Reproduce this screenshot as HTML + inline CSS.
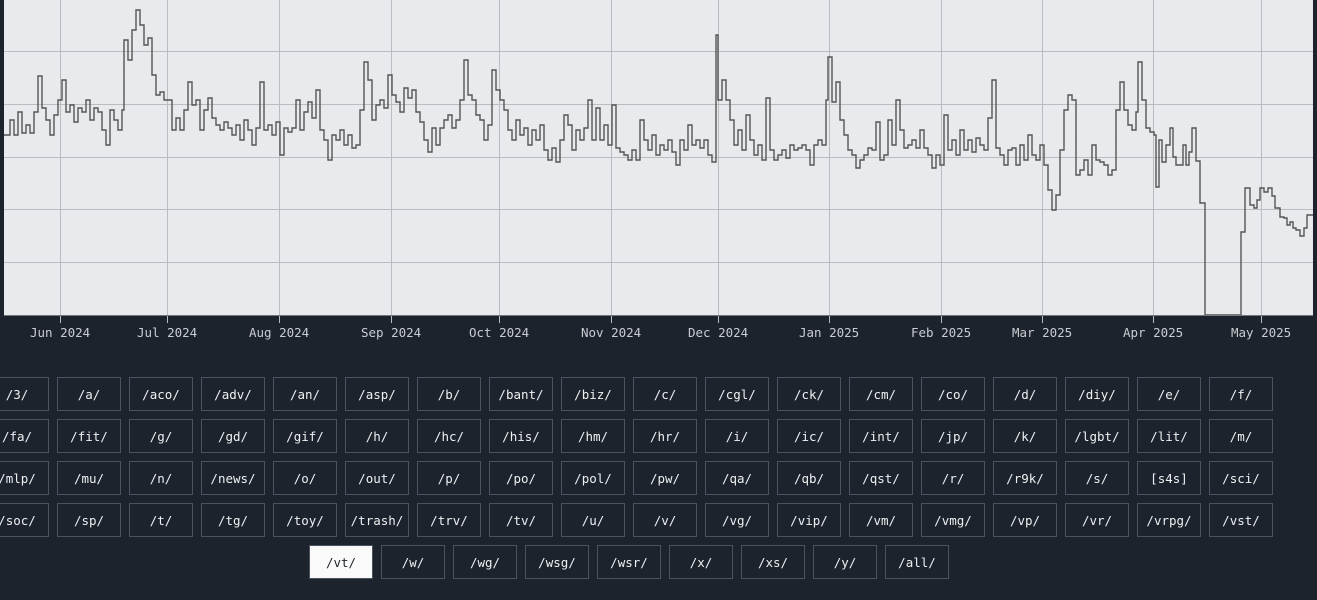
<!DOCTYPE html>
<html><head><meta charset="utf-8"><style>
html,body{margin:0;padding:0;width:1317px;height:600px;overflow:hidden;background:#1d232c;}
#c{position:absolute;left:0;top:0;}
.b{position:absolute;width:62px;height:32px;border:1px solid #4b535e;color:#eef0f2;font:12.5px "DejaVu Sans Mono","Liberation Mono",monospace;display:flex;align-items:center;justify-content:center;box-sizing:content-box;}
.b.on{background:#fafafa;color:#1d232c;}
.ax{position:absolute;top:325px;font:12.5px "DejaVu Sans Mono","Liberation Mono",monospace;color:#c9cdd2;white-space:nowrap;}
</style></head><body>
<svg id="c" width="1317" height="345">
<rect x="4" y="0" width="1309" height="315" fill="#e8ebee"/>
<g stroke="#b9bdc2" stroke-width="1" id="grid"></g>
<path id="p" fill="none" stroke="#555" stroke-width="1.4"/>
<line x1="4" y1="315.5" x2="1313" y2="315.5" stroke="#777" stroke-width="1"/>
</svg>
<div id="labels"></div>
<div id="btns"></div>
<script>
var g=document.getElementById('grid'),s='';
[51,104,157,209,262].forEach(function(y){s+='<line x1="4" x2="1313" y1="'+(y+.5)+'" y2="'+(y+.5)+'"/>';});
var mx=[60,167,279,391,499,611,718,829,941,1042,1153,1261];
var ml=['Jun 2024','Jul 2024','Aug 2024','Sep 2024','Oct 2024','Nov 2024','Dec 2024','Jan 2025','Feb 2025','Mar 2025','Apr 2025','May 2025'];
mx.forEach(function(x){s+='<line y1="0" y2="323" x1="'+(x+.5)+'" x2="'+(x+.5)+'"/>';});
g.innerHTML=s;
var L='';mx.forEach(function(x,i){L+='<div class="ax" style="left:'+(x-30)+'px">'+ml[i]+'</div>';});
document.getElementById('labels').innerHTML=L;
var d=[4,135,10,120,14,135,18,112,22,133,26,125,30,133,34,112,38,76,42,108,46,120,50,135,54,115,58,100,62,80,66,112,70,105,74,122,78,108,82,112,86,100,90,120,94,108,98,112,102,130,106,145,110,110,114,120,118,130,122,110,124,40,128,60,132,30,136,10,140,25,144,45,148,38,152,75,156,95,160,92,164,100,168,100,172,130,176,118,180,130,184,110,188,82,192,105,196,100,200,130,204,110,208,98,212,118,216,125,220,130,224,122,228,128,232,135,236,125,240,140,244,120,248,130,252,145,256,128,260,82,264,130,268,125,272,135,276,122,280,155,284,128,288,132,292,128,296,100,300,130,304,112,308,102,312,118,316,90,320,130,324,140,328,160,332,135,336,140,340,130,344,145,348,135,352,148,356,145,360,110,364,62,368,80,372,120,376,105,380,100,384,108,388,75,392,95,396,102,400,112,404,88,408,98,412,90,416,112,420,122,424,140,428,152,432,128,436,145,440,128,444,120,448,115,452,128,456,120,460,100,464,60,468,95,472,100,476,115,480,120,484,140,488,125,492,70,496,90,500,100,504,110,508,130,512,140,516,120,520,135,524,128,528,145,532,130,536,140,540,125,544,150,548,160,552,148,556,162,560,140,564,115,568,125,572,150,576,130,580,140,584,128,588,100,592,140,596,108,600,140,604,125,608,145,612,105,616,148,620,152,624,155,628,160,632,150,636,160,640,120,644,140,648,150,652,135,656,155,660,145,664,150,668,140,672,152,676,165,680,140,684,150,688,125,692,145,696,140,700,148,704,140,708,155,712,162,716,35,718,100,722,80,726,100,730,120,734,145,738,130,742,150,746,115,750,140,754,155,758,145,762,160,766,98,770,150,774,160,778,155,782,150,786,158,790,145,794,150,798,148,802,145,806,150,810,165,814,145,818,140,822,145,826,100,828,57,832,102,836,82,840,120,844,135,848,150,852,155,856,168,860,160,864,155,868,148,872,150,876,122,880,160,884,155,888,120,892,145,896,100,900,130,904,148,908,145,912,140,916,148,920,130,924,148,928,155,932,168,936,155,940,165,944,115,948,150,952,140,956,155,960,130,964,150,968,140,972,152,976,138,980,145,984,150,988,118,992,80,996,148,1000,155,1004,165,1008,150,1012,148,1016,165,1020,145,1024,160,1028,135,1032,155,1036,160,1040,145,1044,165,1048,190,1052,210,1056,195,1060,150,1064,110,1068,95,1072,100,1076,175,1080,170,1084,160,1088,175,1092,145,1096,160,1100,162,1104,165,1108,175,1112,170,1116,110,1120,82,1124,110,1128,125,1132,130,1136,112,1138,62,1142,100,1146,128,1150,132,1154,135,1156,187,1159,140,1162,162,1166,145,1170,128,1173,157,1176,165,1180,165,1183,145,1186,165,1189,152,1192,128,1196,161,1200,203,1205,315,1240,315,1241,232,1245,188,1250,205,1254,208,1257,200,1260,188,1264,192,1268,188,1272,196,1275,208,1280,217,1284,218,1287,225,1290,222,1293,228,1296,230,1300,236,1304,228,1307,215,1313,215];
var p='M'+d[0]+' '+d[1];
for(var i=2;i<d.length;i+=2){p+='H'+d[i]+'V'+d[i+1];}
document.getElementById('p').setAttribute('d',p);
var rows=[['/3/','/a/','/aco/','/adv/','/an/','/asp/','/b/','/bant/','/biz/','/c/','/cgl/','/ck/','/cm/','/co/','/d/','/diy/','/e/','/f/'],
['/fa/','/fit/','/g/','/gd/','/gif/','/h/','/hc/','/his/','/hm/','/hr/','/i/','/ic/','/int/','/jp/','/k/','/lgbt/','/lit/','/m/'],
['/mlp/','/mu/','/n/','/news/','/o/','/out/','/p/','/po/','/pol/','/pw/','/qa/','/qb/','/qst/','/r/','/r9k/','/s/','[s4s]','/sci/'],
['/soc/','/sp/','/t/','/tg/','/toy/','/trash/','/trv/','/tv/','/u/','/v/','/vg/','/vip/','/vm/','/vmg/','/vp/','/vr/','/vrpg/','/vst/'],
['/vt/','/w/','/wg/','/wsg/','/wsr/','/x/','/xs/','/y/','/all/']];
var B='';
rows.forEach(function(r,ri){var x0=ri==4?309:-15;r.forEach(function(t,k){
B+='<div class="b'+(ri==4&&k==0?' on':'')+'" style="left:'+(x0+72*k)+'px;top:'+(377+42*ri)+'px">'+t+'</div>';});});
document.getElementById('btns').innerHTML=B;
</script>
</body></html>
